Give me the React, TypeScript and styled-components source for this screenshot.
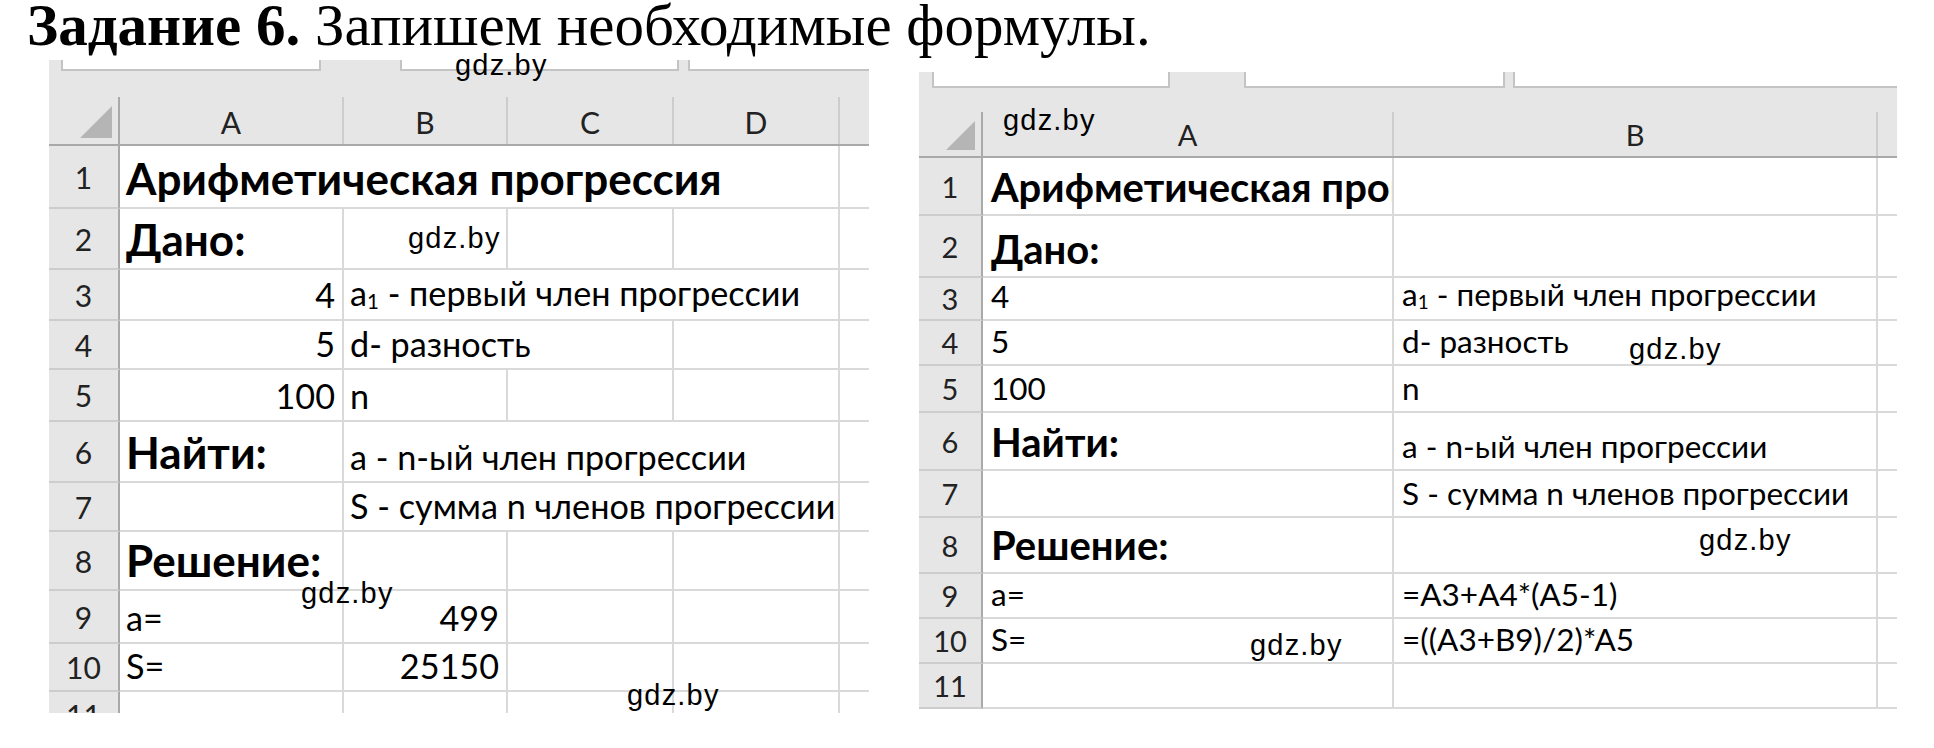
import React from 'react';
import styled, { createGlobalStyle } from 'styled-components';

type CellData = {
  text?: React.ReactNode;
  bold?: boolean;
  right?: boolean;
  span?: number;
  clip?: boolean;
};

type RowData = { h: number; cells: CellData[] };

type SheetSpec = {
  top: number;
  left: number;
  width: number;
  height: number;
  tabH: number;
  tabs: [number, number][];
  bandH: number;
  headH: number;
  cols: number[];
  letters: string[];
  tri: number;
  fs: number;
  bfs: number;
  hfs: number;
  pad: number;
  rows: RowData[];
};

const GlobalStyle = createGlobalStyle`
  html, body {
    margin: 0;
    padding: 0;
    background: #ffffff;
  }
  body {
    width: 1934px;
    height: 748px;
    overflow: hidden;
    font-family: Lato, "Open Sans", sans-serif;
  }
`;

const Page = styled.div`
  position: relative;
  width: 1934px;
  height: 748px;
  overflow: hidden;
`;

const Heading = styled.h1`
  margin: 0;
  padding-left: 27px;
  height: 50px;
  font-family: "Liberation Serif", "Times New Roman", serif;
  font-weight: normal;
  font-size: 59px;
  line-height: 50px;
  color: #000;
  white-space: nowrap;

  b {
    font-weight: bold;
  }
`;

const Sheets = styled.div`
  display: flex;
  align-items: flex-start;
`;

const SheetFrame = styled.div<{ $top: number; $left: number; $width: number; $height: number }>`
  flex: none;
  margin-top: ${p => p.$top}px;
  margin-left: ${p => p.$left}px;
  width: ${p => p.$width}px;
  height: ${p => p.$height}px;
  overflow: hidden;
  display: flex;
  flex-direction: column;
  background: #fff;
`;

const TabStrip = styled.div<{ $h: number }>`
  flex: none;
  display: flex;
  height: ${p => p.$h}px;
  background: #e6e6e6;
`;

const Tab = styled.div<{ $gap: number; $w: number }>`
  flex: none;
  box-sizing: border-box;
  margin-left: ${p => p.$gap}px;
  width: ${p => p.$w}px;
  background: #fff;
  border: 2px solid #c4c4c4;
  border-top: none;
`;

const Band = styled.div<{ $h: number }>`
  flex: none;
  height: ${p => p.$h}px;
  background: #e6e6e6;
`;

const HeaderRow = styled.div<{ $h: number; $cols: string }>`
  flex: none;
  display: grid;
  grid-template-columns: ${p => p.$cols};
  height: ${p => p.$h}px;
  box-sizing: border-box;
  background: #e6e6e6;
  border-bottom: 2px solid #a9a9a9;
`;

const Corner = styled.div<{ $tri: number }>`
  display: flex;
  align-items: flex-end;
  justify-content: flex-end;
  padding: 0 6px 6px 0;
  border-right: 2px solid #a9a9a9;

  &::after {
    content: '';
    width: ${p => p.$tri}px;
    height: ${p => p.$tri}px;
    background: #b5b5b5;
    clip-path: polygon(100% 0, 100% 100%, 0 100%);
  }
`;

const ColLetter = styled.div<{ $fs: number }>`
  display: flex;
  align-items: flex-end;
  justify-content: center;
  padding-bottom: 7px;
  border-right: 2px solid #cdcdcd;
  font-size: ${p => p.$fs}px;
  line-height: 1;
  color: #222;
`;

const Row = styled.div<{ $h: number; $cols: string }>`
  flex: none;
  display: grid;
  grid-template-columns: ${p => p.$cols};
  height: ${p => p.$h}px;
`;

const RowNum = styled.div<{ $fs: number }>`
  display: flex;
  align-items: center;
  justify-content: center;
  box-sizing: border-box;
  background: #e6e6e6;
  border-right: 2px solid #a9a9a9;
  border-bottom: 2px solid #cdcdcd;
  font-size: ${p => p.$fs}px;
  line-height: 1;
  color: #222;
`;

const Cell = styled.div<{ $span: number; $fs: number; $bold: boolean; $right: boolean; $clip: boolean; $pad: number }>`
  grid-column: span ${p => p.$span};
  min-width: 0;
  display: flex;
  align-items: flex-end;
  justify-content: ${p => (p.$right ? 'flex-end' : 'flex-start')};
  box-sizing: border-box;
  padding: 0 7px 7px ${p => p.$pad}px;
  border-right: 2px solid #d9d9d9;
  border-bottom: 2px solid #d9d9d9;
  overflow: ${p => (p.$clip ? 'hidden' : 'visible')};
  white-space: nowrap;
  font-size: ${p => p.$fs}px;
  font-weight: ${p => (p.$bold ? 700 : 400)};
  line-height: 1;
  color: #000;
`;

const CellText = styled.span`
  white-space: pre;
`;

const Sub = styled.span`
  font-size: 0.6em;
  vertical-align: -0.15em;
`;

const Watermark = styled.div`
  position: absolute;
  font-family: "Liberation Sans", Arial, sans-serif;
  font-size: 29px;
  letter-spacing: 1.2px;
  line-height: 1;
  color: #000;
  white-space: nowrap;
`;

const leftSheet: SheetSpec = {
  top: 10,
  left: 49,
  width: 820,
  height: 653,
  tabH: 11,
  tabs: [
    [12, 260],
    [79, 279],
    [9, 220],
  ],
  bandH: 26,
  headH: 49,
  cols: [71, 224, 164, 166, 166, 60],
  letters: ['A', 'B', 'C', 'D', ''],
  tri: 32,
  fs: 34.2,
  bfs: 44,
  hfs: 30,
  pad: 6,
  rows: [
    { h: 63, cells: [{ text: 'Арифметическая прогрессия', bold: true, span: 4 }, {}] },
    { h: 61, cells: [{ text: 'Дано:', bold: true }, {}, {}, {}, {}] },
    { h: 51, cells: [{ text: '4', right: true }, { text: <>a<Sub>1</Sub> - первый член прогрессии</>, span: 3 }, {}] },
    { h: 49, cells: [{ text: '5', right: true }, { text: 'd- разность', span: 2 }, {}, {}] },
    { h: 52, cells: [{ text: '100', right: true }, { text: 'n' }, {}, {}, {}] },
    { h: 61, cells: [{ text: 'Найти:', bold: true }, { text: 'a - n-ый член прогрессии', span: 3 }, {}] },
    { h: 49, cells: [{}, { text: 'S - сумма n членов прогрессии', span: 3 }, {}] },
    { h: 59, cells: [{ text: 'Решение:', bold: true }, {}, {}, {}, {}] },
    { h: 53, cells: [{ text: 'a=' }, { text: '499', right: true }, {}, {}, {}] },
    { h: 48, cells: [{ text: 'S=' }, { text: '25150', right: true }, {}, {}, {}] },
    { h: 48, cells: [{}, {}, {}, {}, {}] },
  ],
};

const rightSheet: SheetSpec = {
  top: 22,
  left: 50,
  width: 978,
  height: 637,
  tabH: 16,
  tabs: [
    [13, 238],
    [74, 261],
    [8, 400],
  ],
  bandH: 24,
  headH: 46,
  cols: [64, 411, 484, 60],
  letters: ['A', 'B', ''],
  tri: 29,
  fs: 31.5,
  bfs: 40,
  hfs: 29,
  pad: 8,
  rows: [
    { h: 58, cells: [{ text: 'Арифметическая прогрессия', bold: true, clip: true }, {}, {}] },
    { h: 62, cells: [{ text: 'Дано:', bold: true }, {}, {}] },
    { h: 43, cells: [{ text: '4' }, { text: <>a<Sub>1</Sub> - первый член прогрессии</> }, {}] },
    { h: 45, cells: [{ text: '5' }, { text: 'd- разность' }, {}] },
    { h: 47, cells: [{ text: '100' }, { text: 'n' }, {}] },
    { h: 58, cells: [{ text: 'Найти:', bold: true }, { text: 'a - n-ый член прогрессии' }, {}] },
    { h: 47, cells: [{}, { text: 'S - сумма n членов прогрессии' }, {}] },
    { h: 56, cells: [{ text: 'Решение:', bold: true }, {}, {}] },
    { h: 45, cells: [{ text: 'a=' }, { text: '=A3+A4*(A5-1)' }, {}] },
    { h: 45, cells: [{ text: 'S=' }, { text: '=((A3+B9)/2)*A5' }, {}] },
    { h: 45, cells: [{}, {}, {}] },
  ],
};

const watermarks: [number, number][] = [
  [455, 51],
  [408, 224],
  [301, 579],
  [627, 681],
  [1003, 106],
  [1629, 335],
  [1699, 526],
  [1250, 631],
];

const Sheet: React.FC<{ spec: SheetSpec }> = ({ spec }) => {
  const cols = spec.cols.map(c => `${c}px`).join(' ');
  return (
    <SheetFrame $top={spec.top} $left={spec.left} $width={spec.width} $height={spec.height}>
      <TabStrip $h={spec.tabH}>
        {spec.tabs.map(([gap, w], i) => (
          <Tab key={i} $gap={gap} $w={w} />
        ))}
      </TabStrip>
      <Band $h={spec.bandH} />
      <HeaderRow $h={spec.headH} $cols={cols}>
        <Corner $tri={spec.tri} />
        {spec.letters.map((l, i) => (
          <ColLetter key={i} $fs={spec.hfs}>{l}</ColLetter>
        ))}
      </HeaderRow>
      {spec.rows.map((row, r) => (
        <Row key={r} $h={row.h} $cols={cols}>
          <RowNum $fs={spec.hfs}>{r + 1}</RowNum>
          {row.cells.map((c, i) => (
            <Cell
              key={i}
              $span={c.span ?? 1}
              $fs={c.bold ? spec.bfs : spec.fs}
              $bold={!!c.bold}
              $right={!!c.right}
              $clip={!!c.clip}
              $pad={spec.pad}
            >
              {c.text !== undefined && <CellText>{c.text}</CellText>}
            </Cell>
          ))}
        </Row>
      ))}
    </SheetFrame>
  );
};

const App: React.FC = () => (
  <Page>
    <GlobalStyle />
    <Heading>
      <b>Задание 6.</b> Запишем необходимые формулы.
    </Heading>
    <Sheets>
      <Sheet spec={leftSheet} />
      <Sheet spec={rightSheet} />
    </Sheets>
    {watermarks.map(([x, y], i) => (
      <Watermark key={i} style={{ left: x, top: y }}>gdz.by</Watermark>
    ))}
  </Page>
);

export default App;
